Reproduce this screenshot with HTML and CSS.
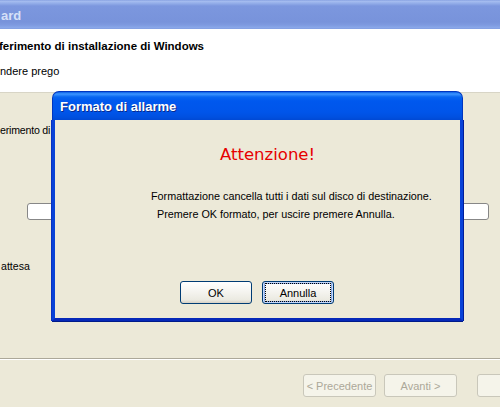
FILE: index.html
```html
<!DOCTYPE html>
<html>
<head>
<meta charset="utf-8">
<link rel="stylesheet" href="styles.css">
</head>
<body>
<div class="window">
  <div class="titlebar"><span class="title-text">ard</span></div>
  <div class="header">
    <div class="header-title">ferimento di installazione di Windows</div>
    <div class="header-sub">ndere prego</div>
  </div>
  <div class="content">
    <div class="label label-top">erimento di</div>
    <div class="progress"></div>
    <div class="label label-bottom">attesa</div>
  </div>
  <div class="footer">
    <button class="xpbtn disabled">&lt; Precedente</button>
    <button class="xpbtn disabled">Avanti &gt;</button>
    <button class="xpbtn disabled third"></button>
  </div>

  <div class="dialog">
    <div class="dlg-title">Formato di allarme</div>
    <div class="dlg-body">
      <div class="warn">Attenzione!</div>
      <div class="msg msg1">Formattazione cancella tutti i dati sul disco di destinazione.</div>
      <div class="msg msg2">Premere OK formato, per uscire premere Annulla.</div>
      <div class="dlg-buttons">
        <button class="xpbtn">OK</button>
        <button class="xpbtn default"><span class="focus">Annulla</span></button>
      </div>
    </div>
  </div>
</div>
</body>
</html>
```

FILE: styles.css
```css
* { box-sizing: border-box; }
html, body {
  margin: 0;
  padding: 0;
  width: 500px;
  height: 407px;
  overflow: hidden;
  background: #ece9d8;
  font-family: "Liberation Sans", Arial, sans-serif;
  font-size: 11px;
  color: #000;
}
.window {
  position: relative;
  width: 500px;
  height: 407px;
  display: flex;
  flex-direction: column;
}
.titlebar {
  height: 29px;
  flex: none;
  background: linear-gradient(#7d98dd 0px, #a8bff0 1px, #96b0ea 3px, #7c97de 6px, #7893db 22px, #7e9ae0 25px, #8ba9ea 28px, #7d98dd 29px);
  display: flex;
  align-items: center;
}
.title-text {
  font-weight: bold;
  font-size: 13px;
  color: #d6e0f7;
  margin-left: 1px;
  margin-top: 1px;
}
.header {
  height: 64px;
  flex: none;
  background: #fff;
  border-bottom: 1px solid #d8d5c6;
  padding-top: 10px;
}
.header-title {
  font-weight: bold;
  font-size: 11.5px;
  margin-left: -1px;
  line-height: 14px;
}
.header-sub {
  margin-top: 11px;
  line-height: 14px;
  font-size: 11px;
}
.content {
  flex: 1;
  position: relative;
  border-bottom: 1px solid #aca899;
  box-shadow: 0 1px 0 #fff;
}
.label { line-height: 14px; font-size: 10.6px; }
.label-top { margin-top: 30px; letter-spacing: -0.2px; }
.progress {
  margin-top: 66px;
  margin-left: 27px;
  width: 462px;
  height: 17px;
  background: #fff;
  border: 1px solid #878787;
  border-radius: 3px;
}
.label-bottom { margin-top: 39px; margin-left: 1px; }
.footer {
  height: 48px;
  flex: none;
  display: flex;
  align-items: flex-start;
  padding-top: 15px;
  padding-left: 303px;
  gap: 8px;
  overflow: hidden;
}
.xpbtn {
  flex: none;
  width: 73px;
  height: 23px;
  padding: 0;
  font-family: "Liberation Sans", Arial, sans-serif;
  font-size: 11px;
  color: #000;
  border: 1px solid #003c74;
  border-radius: 3px;
  background: linear-gradient(#ffffff 0%, #f4f3ee 50%, #ebeae1 85%, #d6d0c5 100%);
  display: flex;
  align-items: center;
  justify-content: center;
}
.xpbtn.disabled {
  color: #aca899;
  border-color: #c9c7ba;
  background: #f5f4ea;
}
.xpbtn.third { margin-left: 12px; }
.dialog {
  position: absolute;
  left: 52px;
  top: 91px;
  width: 411px;
  height: 230px;
  display: flex;
  flex-direction: column;
}
.dlg-title {
  height: 29px;
  flex: none;
  border-radius: 7px 7px 0 0;
  background: linear-gradient(#0a5fe6 0px, #3d95ff 2px, #0866f0 5px, #0058ee 9px, #0055ea 20px, #0050e0 25px, #0046d0 29px);
  border: 1px solid #0036c0;
  border-bottom: none;
  color: #fff;
  font-weight: bold;
  font-size: 13px;
  padding-left: 7px;
  padding-top: 7px;
  text-shadow: 1px 1px 0 #0a2a8a;
}
.dlg-body {
  flex: 1;
  background: #ece9d8;
  border: 3px solid #0842d8;
  border-top: none;
  box-shadow: 0 1px 0 #001a8a, 1px 0 0 #001e9a, -1px 0 0 #0831c0;
  border-bottom-color: #0628b8;
  display: flex;
  flex-direction: column;
}
.warn {
  color: #e60000;
  font-family: "DejaVu Sans", sans-serif;
  font-size: 16.5px;
  line-height: 20px;
  margin-top: 25px;
  margin-left: 165px;
}
.msg {
  font-family: "Liberation Sans", Arial, sans-serif;
  font-size: 10.8px;
  line-height: 14px;
}
.msg1 { margin-top: 24px; margin-left: 96px; }
.msg2 { margin-top: 4px; margin-left: 102px; }
.dlg-buttons {
  margin-top: 60px;
  display: flex;
  justify-content: center;
  gap: 10px;
  margin-left: -1px;
}
.dlg-buttons .xpbtn { width: 72px; }
.xpbtn.default {
  box-shadow: inset 0 0 0 1px #c5d7f8, inset 0 0 0 2px #89abe8;
}
.focus {
  display: flex;
  align-items: center;
  justify-content: center;
  width: 64px;
  height: 17px;
  outline: 1px dotted #000;
}
```
